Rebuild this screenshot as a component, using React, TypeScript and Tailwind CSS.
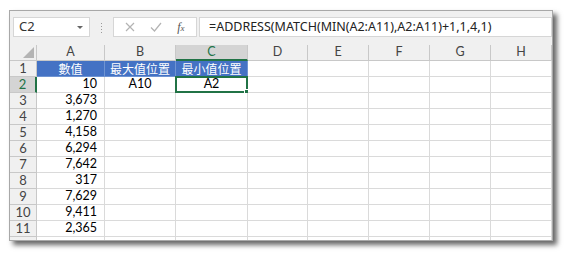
import React from 'react';

const COLS = [
  { key: 'A', w: 'w-[68px]' },
  { key: 'B', w: 'w-[71px]' },
  { key: 'C', w: 'w-[72px]' },
  { key: 'D', w: 'w-[60px]' },
  { key: 'E', w: 'w-[61px]' },
  { key: 'F', w: 'w-[61px]' },
  { key: 'G', w: 'w-[61px]' },
  { key: 'H', w: 'flex-1' },
];

const VALUES = ['10', '3,673', '1,270', '4,158', '6,294', '7,642', '317', '7,629', '9,411', '2,365'];

const cellFont = { fontFamily: 'Lato, "Noto Sans CJK TC", sans-serif' };
const cjkFont = { fontFamily: '"Noto Sans CJK TC", "Noto Sans", sans-serif' };
const uiFont = { fontFamily: '"Noto Sans", "Open Sans", sans-serif' };

function FormulaBar() {
  return (
    <div className="flex h-[34px] items-start bg-[#f0f0f0] pt-[6px]" style={uiFont}>
      <div className="ml-[3px] flex h-[20px] w-[77px] items-center justify-between border border-[#d6d6d6] bg-white pl-[5px] pr-[6px] text-[13px] text-[#333]">
        <span>C2</span>
        <span className="h-0 w-0 border-x-[3px] border-t-[3px] border-x-transparent border-t-[#666]" />
      </div>
      <div className="flex w-[23px] flex-col items-center gap-[2px] pt-[6px]">
        <span className="h-[1px] w-[1px] bg-[#9a9a9a]" />
        <span className="h-[1px] w-[1px] bg-[#9a9a9a]" />
        <span className="h-[1px] w-[1px] bg-[#9a9a9a]" />
        <span className="h-[1px] w-[1px] bg-[#9a9a9a]" />
      </div>
      <div className="flex h-[20px] w-[84px] items-center justify-around border border-[#d6d6d6] bg-white px-[4px]">
        <svg width="10" height="10" viewBox="0 0 10 10">
          <path d="M1 1L9 9M9 1L1 9" stroke="#b3b3b3" strokeWidth="1.2" />
        </svg>
        <svg width="12" height="10" viewBox="0 0 12 10">
          <path d="M1 5.5L4.5 9L11 1" stroke="#b3b3b3" strokeWidth="1.2" fill="none" />
        </svg>
        <span className="text-[12px] italic text-[#555]" style={{ fontFamily: '"Liberation Serif", serif' }}>
          f<span className="text-[9px]">x</span>
        </span>
      </div>
      <div className="ml-[2px] flex h-[20px] flex-1 items-center border border-[#d6d6d6] bg-white pl-[9px] text-[12.5px] text-[#222]">
        =ADDRESS(MATCH(MIN(A2:A11),A2:A11)+1,1,4,1)
      </div>
    </div>
  );
}

function HeaderRow() {
  return (
    <div className="flex h-[16px] bg-[#f0f0f0] text-[12.5px] text-[#444]" style={cellFont}>
      <div className="relative w-[27px] border-r border-b border-[#c8c8c8]">
        <span className="absolute right-[2px] bottom-[2px] h-0 w-0 border-l-[11px] border-l-transparent [border-bottom:11px_solid_#b4b4b4]" />
      </div>
      {COLS.map((c) =>
        c.key === 'C' ? (
          <div
            key={c.key}
            className={`${c.w} flex items-center justify-center border-r border-b-2 border-r-[#c8c8c8] border-b-[#217346] bg-[#d4d4d4] leading-none text-[#217346]`}
          >
            {c.key}
          </div>
        ) : (
          <div key={c.key} className={`${c.w} flex items-center justify-center border-r border-b border-[#c8c8c8] leading-none`}>
            {c.key}
          </div>
        )
      )}
    </div>
  );
}

function RowHead({ n, active }: { n: number; active?: boolean }) {
  return active ? (
    <div
      className="flex w-[27px] items-center justify-center border-r-2 border-b border-r-[#217346] border-b-[#c8c8c8] bg-[#d4d4d4] text-[13px] text-[#217346]"
      style={cellFont}
    >
      {n}
    </div>
  ) : (
    <div
      className="flex w-[27px] items-center justify-center border-r border-b border-[#c8c8c8] bg-[#f0f0f0] text-[13px] text-[#444]"
      style={cellFont}
    >
      {n <= 11 ? n : ''}
    </div>
  );
}

function Row({ n }: { n: number }) {
  return (
    <div className="flex h-[16px] leading-none">
      <RowHead n={n} active={n === 2} />
      {COLS.map((c) => {
        if (n === 1 && (c.key === 'A' || c.key === 'B' || c.key === 'C')) {
          const label = c.key === 'A' ? '數值' : c.key === 'B' ? '最大值位置' : '最小值位置';
          return (
            <div
              key={c.key}
              className={`${c.w} flex items-center justify-center border-r border-b border-[#6f94d2] bg-[#4472c4] pt-[1px] text-[12px] leading-none text-white`}
              style={cjkFont}
            >
              {label}
            </div>
          );
        }
        let text = '';
        let align = 'justify-center';
        if (c.key === 'A' && n >= 2 && n <= 11) {
          text = VALUES[n - 2];
          align = 'justify-end pr-[7px]';
        }
        if (n === 2 && c.key === 'B') text = 'A10';
        if (n === 2 && c.key === 'C') text = 'A2';
        return (
          <div
            key={c.key}
            className={`${c.w} relative flex items-center ${align} border-r border-b border-[#dadada] bg-white text-[12.5px] text-black`}
            style={cellFont}
          >
            {text}
            {n === 2 && c.key === 'C' && (
              <>
                <span className="absolute -top-[1px] -left-[1px] -right-[1px] -bottom-[1px] border-2 border-[#217346]" />
                <span className="absolute -right-[3px] -bottom-[3px] h-[6px] w-[6px] border border-white bg-[#217346]" />
              </>
            )}
          </div>
        );
      })}
    </div>
  );
}

export default function App() {
  return (
    <div className="h-[255px] w-[567px] bg-white pl-[9px] pt-[10px]">
      <div className="h-[231px] w-[544px] overflow-hidden border border-[#a8a8a8] bg-white shadow-[4px_4px_5px_rgba(0,0,0,0.6)]">
        <FormulaBar />
        <HeaderRow />
        {Array.from({ length: 12 }, (_, i) => (
          <Row key={i} n={i + 1} />
        ))}
      </div>
    </div>
  );
}
